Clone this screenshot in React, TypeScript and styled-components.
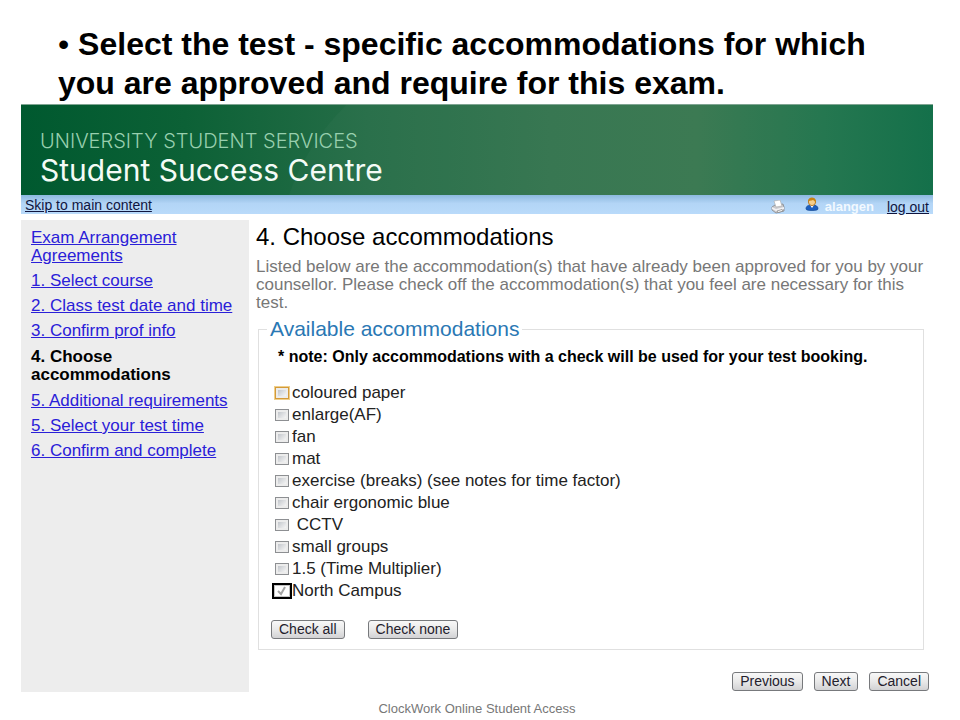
import React, { useState } from "react";
import styled, { createGlobalStyle } from "styled-components";

const GlobalStyle = createGlobalStyle`
  * { box-sizing: border-box; }
  body {
    margin: 0;
    background: #fff;
    color: #000;
    font-family: "Liberation Sans", Arial, sans-serif;
  }
`;

const Slide = styled.div`
  display: flex;
  flex-direction: column;
`;

const SlideTitle = styled.h1`
  margin: 0;
  padding: 25px 60px 1px 58px;
  font-size: 32px;
  line-height: 39px;
  font-weight: 700;
`;

const Bullet = styled.span`
  font-weight: 400;
`;

const Frame = styled.div`
  display: flex;
  flex-direction: column;
  margin: 0 27px 0 21px;
`;

const Banner = styled.header`
  position: relative;
  padding: 24px 19px 8px;
  border-top: 1px solid #7fa592;
  background: linear-gradient(90deg, #00592f 0%, #0c6136 18%, #256d47 38%, #34744e 58%, #38774f 74%, #20744c 88%, #0f6d46 100%);
`;

const Sheen = styled.svg`
  position: absolute;
  inset: 0;
  width: 100%;
  height: 100%;
`;

const Department = styled.div`
  position: relative;
  color: #98cfae;
  font-family: Inter, sans-serif;
  font-weight: 300;
  font-size: 20px;
  line-height: 24px;
`;

const Centre = styled.div`
  position: relative;
  color: #f4fbf6;
  font-family: Inter, sans-serif;
  font-size: 30px;
  line-height: 34px;
`;

const UtilityBar = styled.nav`
  display: flex;
  align-items: center;
  justify-content: space-between;
  height: 19px;
  padding: 0 4px;
  background: linear-gradient(#8db9df, #b3d5f6 45%, #b9dafa);
  font-size: 14px;
  line-height: 18px;
`;

const UtilityLink = styled.a`
  color: #10153f;
`;

const Session = styled.div`
  display: flex;
  align-items: center;
`;

const UserName = styled.span`
  margin: 4px 13px 0 6px;
  color: #f2f9ff;
  font-size: 13px;
  font-weight: 700;
`;

const LogOut = styled(UtilityLink)`
  margin-top: 4px;
`;

const PrinterIcon = styled.svg`
  width: 14px;
  height: 14px;
  margin: 4px 20px 0 0;
`;

const UserIcon = styled.svg`
  width: 14px;
  height: 15px;
`;

const Columns = styled.div`
  display: grid;
  grid-template-columns: 228px 1fr;
  gap: 7px;
  margin-top: 6px;
`;

const Sidebar = styled.nav`
  min-height: 472px;
  padding: 9px 10px;
  background: #ededed;
`;

const Steps = styled.ul`
  display: flex;
  flex-direction: column;
  gap: 7px;
  margin: 0;
  padding: 0;
  list-style: none;
`;

const Step = styled.li`
  font-size: 17px;
  line-height: 18px;
`;

const StepLink = styled.a`
  color: #2a20d8;
`;

const CurrentStep = styled.strong`
  display: block;
  padding: 1px 0;
`;

const Content = styled.main`
  display: flex;
  flex-direction: column;
`;

const Heading = styled.h2`
  margin: 4px 0 8px;
  font-size: 24px;
  line-height: 26px;
  font-weight: 400;
`;

const Intro = styled.p`
  margin: 0 4px 0 0;
  color: #777;
  font-size: 17px;
  line-height: 18px;
`;

const Group = styled.fieldset`
  min-width: 0;
  margin: 7px 9px 0 2px;
  padding: 8px 12px 10px;
  border: 1px solid #e0e0e0;
`;

const GroupTitle = styled.legend`
  margin-left: -4px;
  padding: 0 3px;
  color: #2a78b4;
  font-size: 21px;
  line-height: 20px;
`;

const Note = styled.p`
  margin: 0 0 15px 7px;
  font-size: 16px;
  line-height: 20px;
  font-weight: 700;
`;

const Options = styled.div`
  display: grid;
  padding-left: 3px;
`;

const Option = styled.label`
  display: flex;
  align-items: center;
  gap: 2px;
  height: 22px;
  color: #222;
  font-size: 17px;
  line-height: 20px;
  white-space: pre;
`;

const CheckCell = styled.span<{ $framed?: boolean }>`
  display: flex;
  margin: ${(p) => (p.$framed ? "0 -2px" : "0 1px")};
  border: ${(p) => (p.$framed ? "2px solid #000" : "0")};
`;

const Tick = styled.input<{ $highlight?: boolean }>`
  appearance: none;
  width: ${(p) => (p.disabled ? "16px" : "14px")};
  height: 12px;
  margin: 0;
  border: 1px solid ${(p) => (p.disabled ? "#c4c4c4" : p.$highlight ? "#d39a3a" : "#8d8f92")};
  outline: ${(p) => (p.$highlight ? "1px solid #f0cf8b" : "none")};
  background: linear-gradient(135deg, #b4b9c0, #f4f4f4 80%);
  box-shadow: inset 0 0 0 2px #ececec;

  &:checked {
    box-shadow: none;
    background: #fff
      url("data:image/svg+xml,%3Csvg xmlns='http://www.w3.org/2000/svg' viewBox='0 0 14 10'%3E%3Cpath d='M3 5l3 3 4-7' fill='none' stroke='%23a5a5a5' stroke-width='2'/%3E%3C/svg%3E")
      center / 100% 100% no-repeat;
  }
`;

const ButtonRow = styled.div<{ $end?: boolean }>`
  display: flex;
  justify-content: ${(p) => (p.$end ? "flex-end" : "flex-start")};
  gap: ${(p) => (p.$end ? "11px" : "23px")};
  margin: ${(p) => (p.$end ? "22px 4px 0 0" : "18px 0 0")};
`;

const Button = styled.button`
  height: 19px;
  padding: 0 7px;
  border: 1px solid #77797c;
  border-radius: 3px;
  background: linear-gradient(#f8f8f8, #e9e9e9 50%, #d2d2d4);
  color: #23202c;
  font: 14px/17px "Liberation Sans", Arial, sans-serif;
`;

const Footer = styled.footer`
  padding: 8px 0 4px;
  color: #777;
  font-size: 13px;
  line-height: 18px;
  text-align: center;
`;

const steps = [
  "Exam Arrangement Agreements",
  "1. Select course",
  "2. Class test date and time",
  "3. Confirm prof info",
  "4. Choose accommodations",
  "5. Additional requirements",
  "5. Select your test time",
  "6. Confirm and complete",
];
const currentStep = 4;

const accommodations = [
  "coloured paper",
  "enlarge(AF)",
  "fan",
  "mat",
  "exercise (breaks) (see notes for time factor)",
  "chair ergonomic blue",
  " CCTV",
  "small groups",
  "1.5 (Time Multiplier)",
  "North Campus",
];
const lockedIndex = accommodations.length - 1;

export default function App() {
  const [checked, setChecked] = useState<boolean[]>(accommodations.map((_, i) => i === lockedIndex));
  const setAll = (value: boolean) => setChecked(accommodations.map((_, i) => i === lockedIndex || value));
  const toggle = (index: number) => setChecked((prev) => prev.map((v, i) => (i === index ? !v : v)));

  return (
    <Slide>
      <GlobalStyle />
      <SlideTitle>
        <Bullet>•</Bullet> Select the test - specific accommodations for which you are approved and require for
        this exam.
      </SlideTitle>
      <Frame>
        <Banner>
          <Sheen viewBox="0 0 912 90" preserveAspectRatio="none" aria-hidden="true">
            <path d="M325 0Q285 40 268 90H912V0Z" fill="#fff" opacity="0.025" />
          </Sheen>
          <Department>UNIVERSITY STUDENT SERVICES</Department>
          <Centre>Student Success Centre</Centre>
        </Banner>
        <UtilityBar aria-label="Utility">
          <UtilityLink href="#main">Skip to main content</UtilityLink>
          <Session>
            <PrinterIcon viewBox="0 0 14 14" aria-hidden="true">
              <path d="M1 7l3-2 8-1 1 3v4l-8 2-4-3z" fill="#c9c9cd" stroke="#85868a" strokeWidth="0.8" />
              <path d="M3 1l6-1 2 6-6 1z" fill="#fff" stroke="#aaa" strokeWidth="0.6" />
              <path d="M1 7l4 2 8-2v2l-8 2-4-2z" fill="#f1f1f3" />
              <path d="M6 11l5-1.500 1 1.500-5 1.500z" fill="#fff" stroke="#777" strokeWidth="0.6" />
            </PrinterIcon>
            <UserIcon viewBox="0 0 14 15" aria-hidden="true">
              <path d="M1 12c0-3 2-4 6-4s6 1 6 4c0 2-12 2-12 0z" fill="#1c5fc0" stroke="#124792" strokeWidth="0.7" />
              <path d="M5 8l2 3 2-3z" fill="#fff" />
              <circle cx="7" cy="5" r="3.600" fill="#f6cf8c" stroke="#a8650a" strokeWidth="0.8" />
              <path d="M3 5c-.5-6 9-6 8 1-1-1-1-2-3-3-2 1-4 0-5 2z" fill="#c98310" />
            </UserIcon>
            <UserName>alangen</UserName>
            <LogOut href="#logout">log out</LogOut>
          </Session>
        </UtilityBar>
        <Columns>
          <Sidebar aria-label="Booking steps">
            <Steps>
              {steps.map((step, i) => (
                <Step key={step}>
                  {i === currentStep ? (
                    <CurrentStep aria-current="step">{step}</CurrentStep>
                  ) : (
                    <StepLink href={`#step-${i}`}>{step}</StepLink>
                  )}
                </Step>
              ))}
            </Steps>
          </Sidebar>
          <Content id="main">
            <Heading>4. Choose accommodations</Heading>
            <Intro>
              Listed below are the accommodation(s) that have already been approved for you by your counsellor.
              Please check off the accommodation(s) that you feel are necessary for this test.
            </Intro>
            <Group>
              <GroupTitle>Available accommodations</GroupTitle>
              <Note>* note: Only accommodations with a check will be used for your test booking.</Note>
              <Options>
                {accommodations.map((name, i) => (
                  <Option key={name}>
                    <CheckCell $framed={i === lockedIndex}>
                      <Tick
                        type="checkbox"
                        checked={checked[i]}
                        disabled={i === lockedIndex}
                        $highlight={i === 0}
                        onChange={() => toggle(i)}
                      />
                    </CheckCell>
                    {name}
                  </Option>
                ))}
              </Options>
              <ButtonRow>
                <Button type="button" onClick={() => setAll(true)}>Check all</Button>
                <Button type="button" onClick={() => setAll(false)}>Check none</Button>
              </ButtonRow>
            </Group>
            <ButtonRow $end>
              <Button type="button">Previous</Button>
              <Button type="button">Next</Button>
              <Button type="button">Cancel</Button>
            </ButtonRow>
          </Content>
        </Columns>
        <Footer>ClockWork Online Student Access</Footer>
      </Frame>
    </Slide>
  );
}
